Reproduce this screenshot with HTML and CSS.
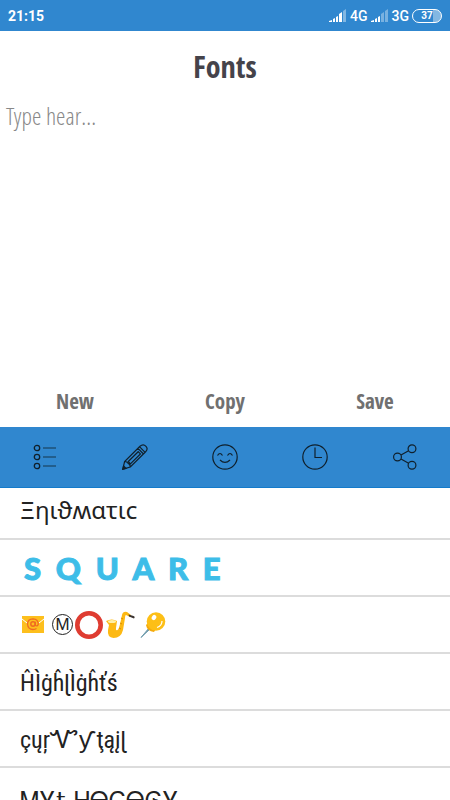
FILE: index.html
```html
<!DOCTYPE html>
<html lang="en">
<head>
<meta charset="utf-8">
<meta name="viewport" content="width=device-width, initial-scale=1">
<title>Fonts</title>
<link rel="stylesheet" href="styles.css">
</head>
<body>
<div class="app">
  <div class="status">
    <span class="time">21:15</span>
    <svg class="signal" viewBox="0 0 18 13" width="18" height="13"><path d="M0 13v-1l3-1v2zM4 13v-3l2-1v4zM7 13V8l2-1v6zM10 13V5l3-2v10z" fill="#fff"/><path d="M14 13V2l3-2v13z" fill="#fff" opacity=".4"/></svg>
    <span>4G</span>
    <svg class="signal" viewBox="0 0 18 13" width="18" height="13"><path d="M0 13v-1l3-1v2zM4 13v-3l2-1v4zM7 13V8l2-1v6z" fill="#fff"/><path d="M10 13V5l3-2v10zM14 13V2l3-2v13z" fill="#fff" opacity=".35"/></svg>
    <span>3G</span>
    <span class="battery">37</span>
  </div>
  <h1 class="title">Fonts</h1>
  <textarea class="editor" aria-label="Text" placeholder="Type hear..."></textarea>
  <div class="actions">
    <button type="button">New</button>
    <button type="button">Copy</button>
    <button type="button">Save</button>
  </div>
  <nav class="toolbar">
    <button type="button" aria-label="Styles"><svg viewBox="0 0 26 26"><g stroke-width="1.3"><circle cx="5" cy="4" r="2.7"/><circle cx="5" cy="13" r="2.7"/><circle cx="5" cy="22" r="2.7"/></g><path d="M11 4h13M11 13h13M11 22h13" stroke-width="1" opacity=".8"/></svg></button>
    <button type="button" aria-label="Edit"><svg viewBox="0 0 26 26"><path d="M.8 25.200 2.600 17.500 18 2.300q3.200-3 6 0 2.500 2.700-.6 5.700L8.300 23zM2.600 17.500l2.200.5 3 2.900.5 2.100M16 4.300l5.500 5.700M17.700 2.800l5.400 5.500M6.300 17.500 16.200 7.700l2.200 2.200-10 10z"/><path d="M.8 25.200l.8-3.300 2.400 2.500z" fill="#10202c"/></svg></button>
    <button type="button" aria-label="Emoji"><svg viewBox="0 0 26 26"><circle cx="13" cy="13" r="12.200"/><path d="M5.500 11.500q2.500-4 5 0M15.500 11.500q2.500-4 5 0M8 16q5 4.800 10 0"/></svg></button>
    <button type="button" aria-label="Recent"><svg viewBox="0 0 26 26"><circle cx="13" cy="13" r="12.200"/><path d="M13 3.500v10h7"/></svg></button>
    <button type="button" aria-label="Share"><svg viewBox="0 0 26 26"><circle cx="5.500" cy="13" r="3.900"/><circle cx="20" cy="4.800" r="3.900"/><circle cx="20" cy="21.200" r="3.900"/><path d="M9 11l7.600-4.300M9 15l7.600 4.300"/></svg></button>
  </nav>
  <ul class="fonts">
    <li class="enigmatic">Ξηιϑʍατιс</li>
    <li class="square">S  Q  U  A  R  E</li>
    <li class="emoji">
      <svg class="mail" viewBox="0 0 22 17" width="22" height="17"><path d="M0 0h22v17H0z" fill="#fdbf1d"/><path d="M0 3l5 4M22 3l-5 4" stroke="#fff"/><circle cx="11" cy="8" r="2.200" fill="none" stroke="#ef6b22" stroke-width="1.500"/><path d="M13.300 5.800v3.500q2.200 1.800 3-1.300Q16 3 11 2.800 5.700 3 5.500 8q.5 5.500 5.500 5.500 2 0 3.500-1" fill="none" stroke="#ef6b22" stroke-width="1.300"/></svg>
      <span class="metro">M</span>
      <svg viewBox="0 0 28 28" width="28" height="28"><circle cx="14" cy="14" r="11.700" fill="none" stroke="#df3c31" stroke-width="4.600"/></svg>
      <svg class="sax" viewBox="0 0 30 28" width="30" height="28"><path d="M1 10q6-3 11 0l-1 7q-.5 3 1.500 2 1.500-1 3-8l1.500-7Q18 0 22 1l4 3-1 2-4-2q-1 0-1 3l-2 12q-2 8-9.500 8Q2 26.500 3 19l1-5z" fill="#fdb913"/><path d="M23.500 3.500l5 1.500q2 1 .5 2.500l-5-2z" fill="#3b3330"/><ellipse cx="7" cy="10.500" rx="4" ry="1.500" fill="#fff0a8"/><path d="M16 7l2 1M15 12l2 1M14 17l2 1" stroke="#d98b00"/></svg>
      <svg viewBox="0 0 26 26" width="26" height="26"><path d="M1 25.500 9 16l1 1z" fill="#6e9aab" stroke="#6e9aab"/><path d="M6 13q1 6 8 7l2-3-7-7z" fill="#f4a90c"/><circle cx="16" cy="9.500" r="9.300" fill="#fdbf16"/><ellipse cx="14" cy="5.500" rx="2.200" ry="2.700" fill="#fff" transform="rotate(30 14 5.500)"/><path d="M22 9q0 5-5 6.500" fill="none" stroke="#fff" stroke-width="1.200"/></svg>
    </li>
    <li>ĤÌġĥɭÌġĥťś</li>
    <li>çųŗᏉƴ ţąįɭ</li>
    <li class="mythology">ᎷᎩŧ-ᎻᎾᏟᎾᎶᎩ</li>
  </ul>
</div>
</body>
</html>
```
FILE: styles.css
```css
* { box-sizing: border-box; }
body { margin: 0; background: #fff; }
button { border: 0; padding: 0; background: none; font: inherit; color: inherit; cursor: pointer; }
.app {
  display: flex; flex-direction: column; height: 100vh; overflow: hidden;
  font-family: "Open Sans Condensed", "Roboto Condensed", sans-serif;
}
.status {
  display: flex; align-items: center; gap: 3px; flex: none;
  padding: 6px 8px; height: 31px; background: #3087cf; color: #fff;
  font: 500 14px/20px Roboto, sans-serif;
}
.time { margin-right: auto; font-weight: 700; }
.battery {
  width: 30px; height: 14px; border: 1px solid #fff; border-radius: 7px;
  font: 700 10px/12px Roboto, sans-serif; text-align: center;
  background: linear-gradient(90deg, transparent 70%, #ffffff66 70%);
}
.title { flex: none; margin: 0; padding: 16px 0 11px; text-align: center; font-size: 30px; line-height: 40px; color: #45434a; }
.editor {
  flex: 1; min-height: 0; border: 0; padding: 4px 6px; resize: none; outline: 0;
  font: 300 24px/28px "Open Sans Condensed Light", "Open Sans Condensed", sans-serif; color: #222;
}
.editor::placeholder { color: #888; opacity: 1; }
.actions { display: grid; grid-template-columns: repeat(3, 1fr); flex: none; }
.actions button { height: 53px; font-size: 21px; font-weight: 700; color: #707070; }
.toolbar { display: grid; grid-template-columns: repeat(5, 1fr); flex: none; height: 61px; background: #3087cf; border-bottom: 1px solid #147bcb; }
.toolbar button { display: flex; align-items: center; justify-content: center; }
.toolbar svg { width: 26px; height: 26px; fill: none; stroke: #10202c; stroke-width: 1.2; }
.fonts { flex: 0 0 312px; margin: 0; padding: 0; list-style: none; overflow: hidden; }
.fonts li {
  display: flex; align-items: center; height: 57px; padding: 3px 20px 0; border-bottom: 2px solid #dcdcdc;
  font-size: 24px; font-weight: 400; color: #222; white-space: pre;
  font-family: "Roboto Condensed", "Open Sans Condensed Light", sans-serif;
}
.fonts .enigmatic { height: 52px; padding-top: 0; padding-bottom: 8px; font-family: "Noto Sans", sans-serif; }
.fonts .square { padding-top: 0; padding-left: 24px; font: 900 31px/40px Lato, sans-serif; color: #3dbde8; -webkit-text-stroke: 1px #3dbde8; }
.fonts .emoji { gap: 2px; padding-top: 0; padding-left: 22px; white-space: normal; }
.mail { margin-right: 6px; }
.metro { width: 21px; height: 21px; border: 1px solid #222; border-radius: 50%; font: 16px/19px "Noto Sans", sans-serif; text-align: center; }
.sax { margin-right: 3px; }
.fonts .mythology { padding-top: 10px; font-family: "DejaVu Serif", serif; }
```
